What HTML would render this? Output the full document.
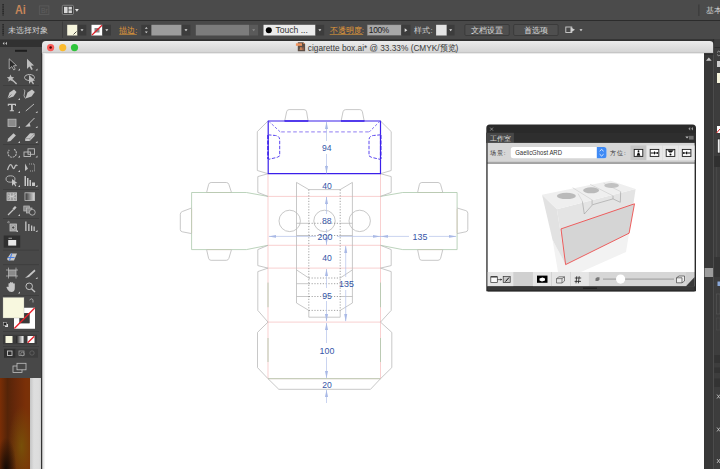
<!DOCTYPE html>
<html><head><meta charset="utf-8">
<style>
html,body{margin:0;padding:0;width:720px;height:469px;overflow:hidden;background:#3a3a3a;}
body{position:relative;font-family:"Liberation Sans",sans-serif;}
svg{position:absolute;left:0;top:0;display:block;}
</style></head>
<body>
<svg width="720" height="469" viewBox="0 0 720 469" font-family="Liberation Sans, sans-serif">
<defs>
  <linearGradient id="desk" x1="0" y1="0" x2="1" y2="0">
    <stop offset="0" stop-color="#7a2e06"/>
    <stop offset="0.25" stop-color="#552408"/>
    <stop offset="0.5" stop-color="#66280a"/>
    <stop offset="0.85" stop-color="#7a3008"/>
    <stop offset="1" stop-color="#7a3208"/>
  </linearGradient>
  <radialGradient id="deskglow" cx="0.72" cy="0.75" r="0.45">
    <stop offset="0" stop-color="#785608" stop-opacity="0.85"/>
    <stop offset="1" stop-color="#7a5008" stop-opacity="0"/>
  </radialGradient>
  <radialGradient id="deskdark" cx="0.2" cy="1" r="0.35">
    <stop offset="0" stop-color="#100804" stop-opacity="0.95"/>
    <stop offset="1" stop-color="#100804" stop-opacity="0"/>
  </radialGradient>
  <linearGradient id="title" x1="0" y1="0" x2="0" y2="1">
    <stop offset="0" stop-color="#ececec"/>
    <stop offset="1" stop-color="#d3d3d3"/>
  </linearGradient>
  <linearGradient id="strip" x1="0" y1="0" x2="1" y2="0">
    <stop offset="0" stop-color="#c4c4c4"/>
    <stop offset="0.3" stop-color="#dedede"/>
    <stop offset="0.7" stop-color="#dcdcdc"/>
    <stop offset="1" stop-color="#c0c0c0"/>
  </linearGradient>
</defs>

<!-- ===== top app bar ===== -->
<rect x="0" y="0" width="720" height="20" fill="#4b4b4b"/>
<rect x="0" y="20" width="720" height="1" fill="#2c2c2c"/>
<!-- bar 2 -->
<rect x="0" y="21" width="720" height="18" fill="#494949"/>
<rect x="0" y="39.5" width="720" height="1.5" fill="#303030"/>
<!-- bar1 content -->
<g>
  <path d="M3.1 4 V15.6" stroke="#1f1f1f" stroke-width="1.3" stroke-dasharray="1.6 0.6"/>
  <text x="15" y="14.2" font-size="12.4" font-weight="bold" fill="#c6865a" textLength="10.8" lengthAdjust="spacingAndGlyphs">Ai</text>
  <rect x="39.3" y="5.9" width="9.6" height="8.6" fill="none" stroke="#5e5e5e" stroke-width="0.7"/>
  <text x="41" y="12.8" font-size="6.8" fill="#5e5e5e">Br</text>
  <rect x="62.3" y="5.3" width="11.2" height="9.2" rx="1.2" fill="#3e3e3e" stroke="#9c9c9c" stroke-width="0.7"/>
  <rect x="64" y="6.8" width="3.6" height="6.3" fill="#d8d8d8"/>
  <rect x="68.5" y="6.8" width="3.4" height="2.8" fill="#d8d8d8"/>
  <rect x="68.5" y="10.3" width="3.4" height="2.8" fill="#d8d8d8"/>
  <path d="M75 9 H78.8 L76.9 11.8 Z" fill="#e8e8e8"/>
  <rect x="698.5" y="4.5" width="0.8" height="11.5" fill="#333"/>
  <text x="705.8" y="12.6" font-size="7.6" fill="#d0d0d0">基本</text>
</g>
<!-- bar2 content -->
<g>
  <path d="M3.1 24 V35.6" stroke="#1f1f1f" stroke-width="1.3" stroke-dasharray="1.6 0.6"/>
  <text x="8.3" y="33" font-size="7.8" fill="#d2d2d2">未选择对象</text>
  <rect x="62" y="21.5" width="0.8" height="16.5" fill="#3a3a3a"/>
  <!-- fill swatch -->
  <rect x="67.2" y="24.8" width="10.3" height="10.7" fill="#f7f6de"/>
  <path d="M73.5 34.5 L76.5 31.5" stroke="#222" stroke-width="0.8"/>
  <rect x="77.5" y="24.8" width="8.8" height="10.7" fill="#3b3b3b"/>
  <path d="M80.5 29.3 H83.5 L82 31.3 Z" fill="#dddddd"/>
  <!-- stroke swatch -->
  <rect x="91.5" y="24.8" width="10.9" height="10.7" fill="#ffffff"/>
  <rect x="94.5" y="28" width="5" height="4.5" fill="#888"/>
  <path d="M92 35 L102 25.3" stroke="#e01e28" stroke-width="1.2"/>
  <rect x="102.4" y="24.8" width="8.6" height="10.7" fill="#3b3b3b"/>
  <path d="M105.3 29.3 H108.3 L106.8 31.3 Z" fill="#dddddd"/>
  <!-- stroke label -->
  <text x="119.3" y="33" font-size="7.8" fill="#e39a3a">描边:</text>
  <rect x="119.3" y="34.3" width="17.5" height="0.6" fill="#e39a3a"/>
  <rect x="141.3" y="24.8" width="10.1" height="10.7" fill="#3c3c3c"/>
  <path d="M144.8 28.7 H147.8 L146.3 27 Z M144.8 31.6 H147.8 L146.3 33.3 Z" fill="#cfcfcf"/>
  <rect x="151.4" y="24.8" width="30.2" height="10.7" fill="#9c9c9c"/>
  <rect x="181.6" y="24.8" width="8.8" height="10.7" fill="#3c3c3c"/>
  <path d="M184.5 29.3 H187.5 L186 31.3 Z" fill="#dddddd"/>
  <rect x="195.8" y="24.8" width="53.5" height="10.7" fill="#7c7c7c"/>
  <rect x="249.3" y="24.8" width="8.8" height="10.7" fill="#5a5a5a"/>
  <path d="M252.2 29.3 H255.2 L253.7 31.3 Z" fill="#8c8c8c"/>
  <!-- brush -->
  <rect x="263.5" y="24.8" width="52" height="10.7" fill="#ebebeb"/>
  <circle cx="268.8" cy="30.2" r="3" fill="#000"/>
  <text x="275.4" y="33.3" font-size="8.6" fill="#333">Touch ...</text>
  <rect x="315.5" y="24.8" width="8.7" height="10.7" fill="#3c3c3c"/>
  <path d="M318.4 29.3 H321.4 L319.9 31.3 Z" fill="#dddddd"/>
  <!-- opacity -->
  <text x="329.7" y="33" font-size="7.8" fill="#e39a3a">不透明度:</text>
  <rect x="329.7" y="34.3" width="33.5" height="0.6" fill="#e39a3a"/>
  <rect x="367.1" y="24.8" width="34.2" height="10.7" fill="#a8a8a8" stroke="#5a5a5a" stroke-width="0.5"/>
  <text x="368.8" y="33.2" font-size="8.4" fill="#222" letter-spacing="-0.3">100%</text>
  <rect x="401.3" y="24.8" width="9.2" height="10.7" fill="#3c3c3c"/>
  <path d="M404.7 28.3 L407.3 30.2 L404.7 32.1 Z" fill="#dddddd"/>
  <text x="414.4" y="33" font-size="7.8" fill="#d0d0d0">样式:</text>
  <rect x="436.1" y="24.8" width="10.7" height="10.7" fill="#e4e4e4"/>
  <rect x="446.8" y="24.8" width="7.8" height="10.7" fill="#3c3c3c"/>
  <path d="M449.2 29.3 H452.2 L450.7 31.3 Z" fill="#dddddd"/>
  <!-- buttons -->
  <rect x="464.9" y="24.5" width="44.3" height="11" rx="1.2" fill="#4f4f4f" stroke="#303030" stroke-width="0.6"/>
  <text x="487" y="32.9" font-size="7.8" fill="#dcdcdc" text-anchor="middle">文档设置</text>
  <rect x="513.7" y="24.5" width="44.4" height="11" rx="1.2" fill="#4f4f4f" stroke="#303030" stroke-width="0.6"/>
  <text x="536" y="32.9" font-size="7.8" fill="#dcdcdc" text-anchor="middle">首选项</text>
  <!-- arrange icon -->
  <rect x="565.8" y="27" width="6" height="5.5" fill="none" stroke="#cfcfcf" stroke-width="0.9"/>
  <path d="M570.5 27.2 L575 29.8 L570.5 32.4 Z" fill="#cfcfcf"/>
  <path d="M579.5 29.3 H582.5 L581 31.3 Z" fill="#dddddd"/>
</g>

<!-- desktop bottom-left -->
<rect x="0" y="378" width="30" height="91" fill="url(#desk)"/>
<rect x="0" y="378" width="30" height="91" fill="url(#deskglow)"/>
<rect x="0" y="378" width="30" height="91" fill="url(#deskdark)"/>
<rect x="30" y="378" width="13" height="91" fill="url(#strip)"/>

<!-- ===== left toolbar ===== -->
<rect x="0" y="39" width="42" height="339" fill="#484848"/>
<rect x="0" y="39.5" width="42" height="7.5" fill="#313131"/>
<path d="M4.3 41.8 L2.7 43.4 L4.3 45 Z M6.9 41.8 L5.3 43.4 L6.9 45 Z" fill="#c8c8c8"/>
<rect x="15" y="49.8" width="12" height="2" fill="#1e1e1e"/>
<!-- separators -->
<g fill="#3b3b3b">
  <rect x="3" y="85.3" width="36" height="0.7"/>
  <rect x="3" y="144" width="36" height="0.7"/>
  <rect x="3" y="189" width="36" height="0.7"/>
  <rect x="3" y="218.2" width="36" height="0.7"/>
  <rect x="3" y="249.8" width="36" height="0.7"/>
  <rect x="3" y="264.4" width="36" height="0.7"/>
  <rect x="3" y="295" width="36" height="0.7"/>
  <rect x="3" y="331" width="36" height="0.7"/>
  <rect x="3" y="346" width="36" height="0.7"/>
</g>
<!-- tool icons -->
<g fill="#c6c6c6" stroke="none">
  <!-- corner triangles -->
  <path d="M18 70.5 H20 V68.5 Z M35.5 70.5 H37.5 V68.5 Z M18 100 H20 V98 Z M18 113 H20 V111 Z M35.5 113 H37.5 V111 Z M18 128 H20 V126 Z M35.5 128 H37.5 V126 Z M18 143 H20 V141 Z M35.5 143 H37.5 V141 Z M18 157.5 H20 V155.5 Z M35.5 157.5 H37.5 V155.5 Z M18 172 H20 V170 Z M18 187 H20 V185 Z M35.5 187 H37.5 V185 Z M18 216 H20 V214 Z M16 232 H18 V230 Z M35.5 232 H37.5 V230 Z M35.5 279 H37.5 V277 Z M18 293.5 H20 V291.5 Z"/>
  <!-- selection -->
  <path d="M9.2 58.8 V69 L11.8 66.5 L13.8 70 L15.2 69.2 L13.4 65.8 L16.5 65.6 Z" fill="#2a2a2a" stroke="#c0c0c0" stroke-width="0.8"/>
  <path d="M27 58.8 V69 L29.4 66.5 L31.4 70 L32.8 69.2 L31 65.8 L34 65.6 Z" fill="#bdbdbd"/>
  <!-- magic wand -->
  <path d="M10.5 74.5 L11.6 77 L14.2 77.2 L12.2 79 L12.8 81.6 L10.5 80.2 L8.2 81.6 L8.8 79 L6.8 77.2 L9.4 77 Z" fill="#bdbdbd"/>
  <path d="M12 79.5 L16.6 84" stroke="#bdbdbd" stroke-width="1.3"/>
  <!-- lasso -->
  <ellipse cx="29.5" cy="77.5" rx="5" ry="3" fill="none" stroke="#bdbdbd" stroke-width="1"/>
  <path d="M29 75 V84 L31 81.5 L33 84.5 L34 83.8 L32.5 81 L35 80.5 Z" fill="#bdbdbd"/>
  <!-- pen -->
  <path d="M7.5 98.5 L9.5 92.5 L14 89.5 L16.5 92 L13.5 96.5 Z" fill="#c4c4c4"/>
  <path d="M7.5 98.5 L11.5 94.5" stroke="#555" stroke-width="0.6"/>
  <path d="M25.5 98.5 L27.5 92.5 L32 89.5 L34.8 92 L31.5 96.5 Z" fill="#c4c4c4"/>
  <path d="M25.5 98.5 Q23 96 24.5 93 Q25.5 90.5 24 89.5" stroke="#c4c4c4" stroke-width="0.8" fill="none"/>
  <!-- type -->
  <path d="M7.8 103.8 H16 V106 H15.2 L15 105 H12.8 V110.2 H14 V111.2 H9.8 V110.2 H11 V105 H8.8 L8.6 106 H7.8 Z"/>
  <!-- line -->
  <path d="M25.8 111 L34 104" stroke="#c4c4c4" stroke-width="0.9"/>
  <!-- rect -->
  <rect x="8" y="119.2" width="8" height="7.3" fill="#8a8a8a" stroke="#b8b8b8" stroke-width="0.8"/>
  <!-- paintbrush -->
  <path d="M34.5 118 L29 123.5" stroke="#c4c4c4" stroke-width="1"/>
  <path d="M29.5 122.5 L25.2 126.8 L30.5 126.5 Z" fill="#c4c4c4"/>
  <!-- pencil -->
  <path d="M7.3 141.8 L8.2 138.5 L13.5 133.2 L15.9 135.6 L10.6 140.9 Z" fill="#c4c4c4"/>
  <!-- eraser -->
  <path d="M25.2 138.5 L30 133.3 H34.6 V136 L29.8 141 H25.2 Z" fill="#c4c4c4"/>
  <path d="M25.2 138.5 H30 L34.6 133.3 M30 138.5 V141" stroke="#777" stroke-width="0.5" fill="none"/>
  <!-- rotate -->
  <path d="M14 149.3 A4.2 4.2 0 1 1 9.3 150" stroke="#bdbdbd" stroke-width="1.1" fill="none" stroke-dasharray="2 0.8"/>
  <!-- scale -->
  <rect x="24" y="152" width="6.5" height="4.5" fill="none" stroke="#bdbdbd" stroke-width="0.9"/>
  <rect x="28" y="148.8" width="6.5" height="5.5" fill="none" stroke="#bdbdbd" stroke-width="0.9"/>
  <!-- warp -->
  <path d="M7.5 170 Q10 162 12 166 Q13.5 171 15 166.5 Q16 164 17.3 166" stroke="#bdbdbd" stroke-width="1.3" fill="none"/>
  <!-- free transform -->
  <path d="M25 163.5 V171 L28 168.8 Z" fill="#bdbdbd"/>
  <path d="M29 164 H34.5 V171 H29" stroke="#bdbdbd" stroke-width="0.8" stroke-dasharray="1 1" fill="none"/>
  <!-- shape builder -->
  <ellipse cx="10.5" cy="179" rx="4.5" ry="3.2" fill="none" stroke="#bdbdbd" stroke-width="0.9"/>
  <path d="M12 179 V186 L13.8 184 L15.5 186.5 L16.3 185.8 L15 183.5 L17.3 183 Z" fill="#c4c4c4"/>
  <!-- perspective -->
  <path d="M24.5 176 H26 V186 H24.5 Z M27 178 H28.5 V186 H27 Z M29.5 180 H31 V186 H29.5 Z M32 182.5 H35 V186 H32 Z"/>
  <!-- mesh -->
  <rect x="7" y="192.8" width="9.6" height="7.7" fill="#9a9a9a" stroke="#c4c4c4" stroke-width="0.8"/>
  <path d="M8 195 Q12 198 16 194 M8 198.5 Q11 195 16 198 M10 193 Q12 197 10 200.5 M13.5 193 Q12 197 14 200.5" stroke="#dddddd" stroke-width="0.6" fill="none"/>
</g>
<defs>
  <linearGradient id="gradtool" x1="0" y1="0" x2="1" y2="0">
    <stop offset="0" stop-color="#333"/><stop offset="1" stop-color="#ddd"/>
  </linearGradient>
  <linearGradient id="gradmode" x1="0" y1="0" x2="1" y2="0">
    <stop offset="0" stop-color="#222"/><stop offset="1" stop-color="#fff"/>
  </linearGradient>
</defs>
<g fill="#c6c6c6">
  <!-- gradient tool -->
  <rect x="25" y="192.8" width="9.6" height="7.7" fill="url(#gradtool)" stroke="#c0c0c0" stroke-width="0.8"/>
  <!-- eyedropper -->
  <path d="M8 215 L13.5 209.5" stroke="#c4c4c4" stroke-width="1.3"/>
  <path d="M12.5 208.5 L15 206 L16.6 207.6 L14 210.2 Z"/>
  <!-- blend -->
  <rect x="23.8" y="206" width="5.5" height="5" fill="#8a8a8a" stroke="#c0c0c0" stroke-width="0.7"/>
  <rect x="26.5" y="208" width="5.5" height="5" fill="#8a8a8a" stroke="#c0c0c0" stroke-width="0.7"/>
  <circle cx="32.3" cy="212.3" r="2.9" fill="#474747" stroke="#c0c0c0" stroke-width="0.8"/>
  <!-- symbol sprayer -->
  <rect x="10" y="224" width="6.5" height="7" fill="#9a9a9a" stroke="#c4c4c4" stroke-width="0.8"/>
  <circle cx="13.2" cy="227.5" r="1.6" fill="#474747" stroke="#ddd" stroke-width="0.6"/>
  <path d="M7 222 L9 223 M8 221 L10 222.5" stroke="#bbb" stroke-width="0.6"/>
  <!-- graph -->
  <path d="M25.2 221.5 H26.5 V231 H25.2 Z M28.2 224 H29.5 V231 H28.2 Z M31 225.5 H32.3 V231 H31 Z M33.5 226.5 H34.8 V231 H33.5 Z"/>
  <!-- artboard selected -->
  <rect x="3.7" y="235.5" width="16.5" height="12.2" fill="#2f2f2f"/>
  <rect x="8.2" y="240" width="8" height="5.6" fill="#e8e8e8"/>
  <rect x="8.5" y="237.8" width="3.5" height="0.8" fill="#bbb"/>
  <!-- slice eraser blue -->
  <path d="M7 259 L10.5 253.5 H17 L14 260.5 H8 Z" fill="#c8c8c8"/>
  <path d="M7.8 257.5 H14.5 M11.8 253.5 L9.5 260.5" stroke="#4a7fe0" stroke-width="1.1"/>
  <!-- artboard tool -->
  <rect x="8.5" y="270" width="7.5" height="6" fill="#8a8a8a"/>
  <path d="M6 270 H18 M6 276 H18 M8.5 267.6 V278.5 M16 267.6 V278.5" stroke="#c0c0c0" stroke-width="0.7"/>
  <!-- slice -->
  <path d="M25 278 L34.5 269.5 L35.5 271 L29 277 Z"/>
  <!-- hand -->
  <path d="M8.5 287 V284 Q8.5 283 9.3 283 Q10 283 10 284 V283 Q10 282 10.8 282 Q11.6 282 11.6 283 V283 Q11.6 282.2 12.4 282.2 Q13.2 282.2 13.2 283 V284 Q13.2 283.3 14 283.3 Q14.8 283.3 14.8 284 V288 Q14.8 292 11.5 292 Q9 292 7.5 289.5 L6.5 287.5 Q6.3 286.5 7.3 286.7 Z"/>
  <!-- zoom -->
  <circle cx="29.2" cy="286.3" r="3.3" fill="none" stroke="#c0c0c0" stroke-width="1"/>
  <path d="M31.5 288.8 L35 292" stroke="#c0c0c0" stroke-width="1.5"/>
  <!-- fill / stroke -->
  <path d="M14 307.7 H35 V328.7 H14 Z M19.5 313.2 V323.2 H29.5 V313.2 Z" fill="#ffffff" fill-rule="evenodd"/>
  <rect x="19.5" y="313.2" width="10" height="10" fill="#3a3a3a"/>
  <path d="M14.3 328.4 L34.7 308" stroke="#e8202a" stroke-width="1.4"/>
  <rect x="3" y="297.4" width="21" height="20.6" fill="#f8f8df" stroke="#999" stroke-width="0.3"/>
  <path d="M29.5 300 L31.6 298.6 M33 302.5 L33 300.5 Q33 299 31.5 299" stroke="#c8c8c8" stroke-width="0.7" fill="none"/>
  <rect x="5" y="324" width="3" height="3" fill="#ddd"/>
  <rect x="3.6" y="322.6" width="3" height="3" fill="#222" stroke="#ccc" stroke-width="0.5"/>
  <!-- color mode row -->
  <rect x="3" y="334.8" width="34" height="9.4" fill="#3a3a3a"/>
  <rect x="5.5" y="336" width="7" height="7" fill="#f8f8df"/>
  <rect x="16.5" y="336" width="7" height="7" fill="url(#gradmode)"/>
  <rect x="27.5" y="336" width="7" height="7" fill="#ffffff"/>
  <path d="M27.7 342.8 L34.3 336.2" stroke="#e8202a" stroke-width="1.3"/>
  <!-- draw mode row -->
  <rect x="4" y="348.8" width="34" height="8.8" fill="#3d3d3d"/>
  <rect x="4" y="348.8" width="11.3" height="8.8" fill="#2f2f2f"/>
  <rect x="7.5" y="351" width="4.5" height="4.5" fill="none" stroke="#c4c4c4" stroke-width="0.9"/>
  <rect x="19" y="351" width="5" height="4.5" fill="none" stroke="#999" stroke-width="0.8"/>
  <circle cx="22.5" cy="354" r="1.8" fill="none" stroke="#999" stroke-width="0.7"/>
  <circle cx="32" cy="353" r="2.2" fill="none" stroke="#6a6a6a" stroke-width="0.7"/>
  <!-- screen mode -->
  <rect x="13" y="366" width="9" height="6.5" fill="none" stroke="#c0c0c0" stroke-width="0.8"/>
  <rect x="17" y="363.3" width="9" height="6.5" fill="#474747" stroke="#c0c0c0" stroke-width="0.8"/>
</g>

<!-- ===== document window ===== -->
<path d="M42 53 V45 Q42 41 46 41 H709.5 Q713.5 41 713.5 45 V53 Z" fill="url(#title)"/>
<rect x="42" y="53" width="672" height="416" fill="#ffffff"/>
<rect x="42" y="52.5" width="671.5" height="0.8" fill="#b8b8b8"/>
<circle cx="50.6" cy="47.6" r="3.6" fill="#f95b57"/>
<circle cx="50.6" cy="47.6" r="1.25" fill="#4a0606"/>
<circle cx="62.7" cy="47.6" r="3.6" fill="#fbbb2e"/>
<circle cx="74.5" cy="47.6" r="3.6" fill="#2fc53c"/>
<!-- doc icon -->
<path d="M297.8 42.3 H303.3 L305.1 44.1 V51.2 H297.8 Z" fill="#5e4e44"/>
<path d="M303.3 42.3 L305.1 44.1 H303.3 Z" fill="#e8925a"/>
<rect x="295.9" y="43.3" width="6.1" height="2.5" fill="#ee9460"/>
<text x="299.2" y="50.2" font-size="4.2" font-weight="bold" fill="#e09060">Ai</text>
<text x="307.8" y="51" font-size="9.4" fill="#3a3a3a" textLength="150.5" lengthAdjust="spacingAndGlyphs">cigarette box.ai* @ 33.33% (CMYK/预览)</text>
<defs>
  <linearGradient id="lshadow" x1="0" y1="0" x2="1" y2="0">
    <stop offset="0" stop-color="#9a9a9a"/>
    <stop offset="0.35" stop-color="#e4e4e4"/>
    <stop offset="1" stop-color="#ffffff"/>
  </linearGradient>
</defs>
<rect x="41" y="53" width="1" height="416" fill="#333"/>
<rect x="42" y="53.3" width="3.5" height="416" fill="url(#lshadow)"/>
<!-- scrollbar -->
<rect x="704.2" y="53.3" width="9.4" height="416" fill="#383838"/>
<rect x="704.2" y="53.3" width="9.4" height="1.2" fill="#252525"/>
<rect x="704.2" y="53.3" width="0.8" height="416" fill="#2c2c2c"/>
<path d="M708.8 57.4 L711.7 60.7 H706 Z" fill="#c8c8c8"/>
<rect x="704.6" y="268" width="8.8" height="9" fill="#9c9c9c"/>
<rect x="713.4" y="39" width="0.8" height="430" fill="#262626"/>
<!-- right dock -->
<rect x="714.2" y="39" width="5.8" height="430" fill="#3d3d3d"/>
<g fill="none" stroke="#bbb" stroke-width="0.7">
  <path d="M717 52.5 L718.8 51 L720 52.2 M717 54.5 L718.8 56 L720 54.8"/>
</g>
<rect x="717" y="61" width="3" height="6" fill="#cfcfcf"/>
<rect x="714.5" y="47" width="5.5" height="0.8" fill="#2a2a2a"/>
<rect x="717" y="73" width="3" height="10" fill="#f6f4dc"/>
<rect x="717" y="126" width="3" height="7" fill="#ffffff"/>
<path d="M716.5 133 L720 129" stroke="#e02020" stroke-width="1"/>
<rect x="717.5" y="139" width="2.5" height="14" fill="#f0f0f0" stroke="#222" stroke-width="0.6"/>
<rect x="714.2" y="156" width="5.8" height="11" fill="#303030"/>
<rect x="716.3" y="167" width="0.8" height="90" fill="#4c4c4c"/>
<rect x="714.2" y="257" width="5.8" height="20" fill="#353535"/>
<rect x="717.5" y="281.5" width="2.5" height="4.5" fill="#8aa8d8"/>
<rect x="716.3" y="294" width="3.7" height="20" fill="none" stroke="#555" stroke-width="0.7"/>
<rect x="716.3" y="318" width="3.7" height="12" fill="none" stroke="#4a4a4a" stroke-width="0.7"/>
<rect x="714.2" y="355" width="5.8" height="8" fill="#333"/>
<rect x="714.2" y="367.5" width="5.8" height="5.5" fill="#333"/>
<rect x="714.2" y="378.5" width="5.8" height="8.5" fill="#333"/>
<path d="M717 394.5 L720 398.5 M717 398.5 L720 394.5 M717 427.5 L720 431.5 M717 431.5 L720 427.5 M717 459 L720 463 M717 463 L720 459" stroke="#c8c8c8" stroke-width="0.8"/>

<!-- ===== die line ===== -->
<g fill="none" stroke-linejoin="round">
  <!-- pink fold lines -->
  <g stroke="#f6bcbc" stroke-width="0.7">
    <path d="M268 173.7 V378.7 M380.5 173.7 V378.7"/>
    <path d="M268 196.4 H380.5 M268 245.3 H380.5 M268 268.1 H380.5 M268 322.1 H380.5 M268 378.7 H380.5"/>
    <path d="M191.6 209 V233 M457.1 209 V233 M207 192.5 H231 M207 249.6 H231 M418 192.5 H442.5 M418 249.6 H442.5"/>
  </g>
  <!-- green -->
  <g stroke="#abc8ab" stroke-width="0.8">
    <path d="M268 196.4 L246.4 192.5 H191.6 V249.6 H246.4 L268 245.3"/>
    <path d="M380.5 196.4 L402.7 192.5 H457.1 V249.6 H402.7 L380.5 245.3"/>
    <path d="M268 282.6 V307.2 M380.5 282.6 V307.2 M268 338 V362 M380.5 338 V362"/>
    <path d="M268 378.7 H380.5"/>
  </g>
  <!-- gray cut lines -->
  <g stroke="#bababa" stroke-width="0.8">
    <path d="M284.7 121 L286.6 111.8 Q287 109.6 289.2 109.6 H304 Q306.2 109.6 306.6 111.8 L308.1 121 M341.1 121 L343 111.8 Q343.5 109.6 345.7 109.6 H359.8 Q362 109.6 362.4 111.8 L364.2 121"/>
    <path d="M268 121 L257.3 131.6 V170.5 L268 173.7 M380.5 121 L391.2 131.6 V170.5 L380.5 173.7"/>
    <path d="M268 173.7 L257.8 176.6 V192.4 L268 196.4 M380.5 173.7 L391.2 176.6 V192.4 L380.5 196.4"/>
    <path d="M206.6 192.5 L208.6 184.5 Q209.1 182.5 211.1 182.5 H226.3 Q228.3 182.5 228.9 184.5 L231.5 192.5 M206.6 249.6 L208.6 258.3 Q209.1 260.3 211.1 260.3 H226.3 Q228.3 260.3 228.9 258.3 L231.5 249.6 M191.6 208 L182.3 211.5 Q180.3 212.3 180.3 214.3 V229.5 Q180.3 231.5 182.3 231.8 L191.6 233.6"/>
    <path d="M417.6 192.5 L419.4 184.5 Q419.8 182.5 421.8 182.5 H438 Q440 182.5 440.6 184.5 L442.8 192.5 M417.6 249.6 L419.4 258.3 Q419.8 260.3 421.8 260.3 H438 Q440 260.3 440.6 258.3 L442.8 249.6 M457.1 208 L465.8 210.6 Q467.8 211.2 467.8 213.2 V229.5 Q467.8 231.5 465.8 231.8 L457.1 233.6"/>
    <path d="M268 245.3 L257.8 249.6 V265.6 L268 268.1 M380.5 245.3 L391.2 249.6 V265.6 L380.5 268.1"/>
    <path d="M268 268.1 L257.8 271.6 V310.4 L268 322.1 M380.5 268.1 L391.2 271.6 V310.4 L380.5 322.1"/>
    <path d="M268 322.1 L257.5 332.4 V367.6 L268 378.7 M380.5 322.1 L391.8 332.4 V367.6 L380.5 378.7"/>
    <path d="M268 378.7 L278.8 389.3 H370.5 L380.5 378.7"/>
    <!-- insert -->
    <path d="M296.5 303 V182.4 L308.8 189.6 H340.2 L352.4 182.4 V303"/>
    <path d="M296.5 269.9 L308.8 278 M352.4 269.9 L340.2 278"/>
    <path d="M296.5 303 L308.8 310.4 V317.2 H340.2 V310.4 L352.4 303"/>
    <path d="M296.5 223.3 H308.8 M340.2 223.3 H352.4 M296.5 235.5 H308.8 M340.2 235.5 H352.4 M296.5 283.7 H308.8 M340.2 283.7 H352.4 M296.5 296.5 H308.8 M340.2 296.5 H352.4"/>
    <circle cx="289.7" cy="220.9" r="10.7"/>
    <circle cx="324.5" cy="220.9" r="10.7"/>
    <circle cx="359.7" cy="220.9" r="10.7"/>
  </g>
  <!-- dotted -->
  <g stroke="#8c8c8c" stroke-width="0.8" stroke-dasharray="1.2 1.6">
    <path d="M308.8 189.6 V310.4 M340.2 189.6 V310.4"/>
    <path d="M308.8 223.3 H340.2 M308.8 235.5 H340.2 M308.8 278 H340.2 M308.8 283.7 H340.2 M308.8 296.5 H340.2 M308.8 310.4 H340.2"/>
  </g>
  <!-- blue top panel -->
  <path d="M284.5 121 H308.3 M341 121 H364.5" stroke="#3b20ea" stroke-width="1.5"/>
  <rect x="268.2" y="121" width="112.3" height="52.7" stroke="#3b20ea" stroke-width="1.2"/>
  <path d="M268 135 V159 M380.7 135 V159" stroke="#3b20ea" stroke-width="1.5" stroke-dasharray="4 1.5"/>
  <g stroke="#a697f5" stroke-width="1.2" stroke-dasharray="3.6 2.4">
    <path d="M281.2 131.9 H369.3"/>
  </g>
  <g stroke="#7564f2" stroke-width="0.9" stroke-dasharray="2.8 1.6">
    <path d="M268.5 121 L280.2 131.9 M380.2 121 L369.3 131.9"/>
  </g>
  <g stroke="#5a46f0" stroke-width="1" stroke-dasharray="3.5 1.5">
    <path d="M268 134.8 L275.4 135.5 Q279.7 136 279.7 140 V155.9 L277.3 157.3 L268 159.5"/>
    <path d="M380.7 134.8 L373.3 135.5 Q369 136 369 140 V155.9 L371.4 157.3 L380.7 159.5"/>
  </g>
  <!-- dimension lines -->
  <g stroke="#b3c1ea" stroke-width="0.7">
    <path d="M326.5 122 V141 M326.5 154 V173"/>
    <path d="M326.5 197 V214 M326.5 229 V233 M326.5 240 V245"/>
    <path d="M326.5 269 V288 M326.5 301 V321"/>
    <path d="M326.5 323 V343 M326.5 357 V378"/>
    <path d="M326.5 390 V403"/>
    <path d="M345.7 246 V277 M345.7 290 V321"/>
    <path d="M269 236.4 H316 M337 236.4 H409 M429 236.4 H456"/>
    <path d="M326.5 165 V173.5 M326.5 197 V205"/>
  </g>
  <g fill="#a9b9e6" stroke="none">
    <path d="M326.5 121.5 L325 129 L328 129 Z M326.5 173.5 L325 166 L328 166 Z"/>
    <path d="M326.5 196.6 L325 204 L328 204 Z M326.5 245 L325 237.5 L328 237.5 Z"/>
    <path d="M326.5 268.4 L325 276 L328 276 Z M326.5 321.8 L325 314 L328 314 Z"/>
    <path d="M326.5 322.4 L325 330 L328 330 Z M326.5 378.4 L325 371 L328 371 Z"/>
    <path d="M326.5 389.5 L325 397 L328 397 Z"/>
    <path d="M345.7 245.6 L344.2 253 L347.2 253 Z M345.7 321.8 L344.2 314 L347.2 314 Z"/>
    <path d="M268.3 236.4 L276 235 L276 237.8 Z M380.7 236.4 L373 235 L373 237.8 Z M380.3 236.4 L388 235 L388 237.8 Z M456.8 236.4 L449 235 L449 237.8 Z"/>
  </g>
</g>
<!-- ===== 3D panel ===== -->
<g>
  <path d="M486.3 128 Q486.3 124.5 489.8 124.5 H692.5 Q696 124.5 696 128 V291.3 H486.3 Z" fill="#2a2a2a"/>
  <rect x="486.3" y="132.8" width="209.7" height="10.1" fill="#2e2e2e"/>
  <rect x="486.3" y="132.8" width="27.6" height="10.1" fill="#474747"/>
  <text x="500.8" y="140.6" font-size="7" fill="#d8d8d8" text-anchor="middle">工作室</text>
  <path d="M490.2 127.6 L493 130.6 M493 127.6 L490.2 130.6" stroke="#9a9a9a" stroke-width="0.8"/>
  <path d="M690.2 127 L688.4 128.8 L690.2 130.6 Z M693 127 L691.2 128.8 L693 130.6 Z" fill="#9a9a9a"/>
  <path d="M685.3 136.6 H688.8 L687.05 138.6 Z" fill="#bdbdbd"/>
  <rect x="689" y="135.8" width="4.6" height="3.8" fill="#6c6c6c"/>
  <!-- controls row -->
  <rect x="487.6" y="142.9" width="207" height="19.2" fill="#d6d6d6"/>
  <rect x="487.6" y="161.8" width="207" height="2" fill="#a6a6a6"/>
  <text x="489.6" y="155.4" font-size="6.2" fill="#333" letter-spacing="1.1">场景:</text>
  <rect x="510.8" y="147" width="95.7" height="11.3" rx="2.5" fill="#ffffff"/>
  <path d="M596.8 147 H604 Q606.5 147 606.5 149.5 V155.8 Q606.5 158.3 604 158.3 H596.8 Z" fill="#3f8af5"/>
  <path d="M599.6 151.2 L601.6 149.4 L603.6 151.2 M599.6 154.2 L601.6 156 L603.6 154.2" stroke="#ffffff" stroke-width="0.8" fill="none"/>
  <text x="515.2" y="154.7" font-size="7.2" fill="#303030" textLength="46.8" lengthAdjust="spacingAndGlyphs">GaelicGhost ARD</text>
  <text x="610" y="155.4" font-size="6.2" fill="#333" letter-spacing="1">方位:</text>
  <rect x="630.5" y="145.5" width="15.8" height="14.6" fill="#c6c6c6"/>
  <rect x="646.6" y="145.5" width="15.6" height="14.6" fill="#e8e8e8"/>
  <rect x="662.6" y="145.5" width="15.6" height="14.6" fill="#e8e8e8"/>
  <rect x="678.6" y="145.5" width="16" height="14.6" fill="#e8e8e8"/>
  <g fill="#ffffff" stroke="#1a1a1a" stroke-width="0.9">
    <rect x="634.2" y="149.4" width="8.6" height="7"/>
    <rect x="650.2" y="149.4" width="8.6" height="7"/>
    <rect x="666.2" y="149.4" width="8.6" height="7"/>
    <rect x="682.3" y="149.4" width="8.6" height="7"/>
  </g>
  <g fill="#111">
    <circle cx="638.5" cy="151.2" r="0.9"/><path d="M636.6 155.8 L637.8 152.4 H639.2 L640.4 155.8 Z"/>
    <path d="M650.6 152.4 H654 V151 L656 152.9 L654 154.8 V153.4 H650.6 Z"/><circle cx="657.2" cy="152.9" r="1"/>
    <path d="M667.2 150.3 H673.8 L671.6 152.6 H669.4 Z"/><circle cx="670.5" cy="154.4" r="1"/>
    <path d="M690.5 152.4 H687.1 V151 L685.1 152.9 L687.1 154.8 V153.4 H690.5 Z"/><circle cx="683.9" cy="152.9" r="1"/>
  </g>
  <!-- preview -->
  <rect x="487.6" y="163.8" width="207" height="108.2" fill="#ffffff"/>
  <!-- 3D box -->
  <path d="M552.5 239.8 L565.6 264.6 L629.1 233.2 L626 252 L572 276 L558 272 Z" fill="#f2f2f2"/>
  <path d="M542 194.7 L556.9 209.3 L565.6 264.6 L552.5 239.8 Z" fill="#e2e2e2"/>
  <path d="M556.9 209.3 L635.6 188.9 L629.1 233.2 L565.6 264.6 Z" fill="#e4e4e4"/>
  <path d="M542 194.7 L610.8 180.8 L635.6 188.9 L556.9 209.3 Z" fill="#efefef"/>
  <path d="M561 228.9 L634.5 203.8 L629.1 233.2 L565.6 264.6 Z" fill="#d5d5d5" stroke="#f03c3c" stroke-width="0.8"/>
  <g fill="none" stroke="#8e8e8e" stroke-width="0.5">
    <path d="M582.4 201.3 L584.3 214 L592.6 204.7 L613 198.9 L620.3 202.3 L620.7 191.6"/>
    <path d="M592.1 199.9 V204.7 M613 196 V198.9"/>
  </g>
  <g fill="none" stroke="#c4c4c4" stroke-width="0.5">
    <path d="M572.6 187.7 L592.1 199.9 M590.1 184.3 L613.4 196 M603.7 183.3 L620.7 191.6 M582.4 201.3 L578 193.5"/>
  </g>
  <ellipse cx="566.4" cy="195.9" rx="9.5" ry="3.2" fill="#bababa"/>
  <ellipse cx="591.1" cy="190.3" rx="8" ry="3" fill="#bababa"/>
  <ellipse cx="611.6" cy="185.6" rx="7.3" ry="2.5" fill="#c2c2c2"/>
  <!-- bottom bar -->
  <rect x="487.6" y="272" width="207" height="14.3" fill="#d0d0d0"/>
  <rect x="487.6" y="272" width="25.7" height="14.3" fill="#e6e6e6"/>
  <rect x="532.9" y="272" width="56" height="14.3" fill="#e6e6e6"/>
  <rect x="551.2" y="272" width="0.6" height="14.3" fill="#c8c8c8"/>
  <rect x="570.2" y="272" width="0.6" height="14.3" fill="#c8c8c8"/>
  <rect x="589" y="272" width="97" height="14.3" fill="#d6d6d6"/>
  <g fill="none" stroke="#333" stroke-width="0.7">
    <rect x="490.8" y="276.8" width="6.5" height="5.6" fill="#fafafa"/>
    <path d="M490.8 276.8 H497.3" stroke-width="1.2"/>
    <path d="M497.3 279.6 H501"/>
    <rect x="503.2" y="276.6" width="7" height="6" fill="#c8c8c8"/>
    <path d="M505.5 281.5 L509 277.5" stroke="#111" stroke-width="1"/>
  </g>
  <path d="M500.5 278.4 L502.2 279.6 L500.5 280.8 Z" fill="#222"/>
  <rect x="537" y="275.6" width="10.5" height="7.2" fill="#000"/>
  <path d="M539.5 278.5 L542.5 277.5 L545 278.5 L545 280.5 L542 281.5 L539.5 280.5 Z" fill="#fff"/>
  <path d="M556.5 278.6 L559 276.8 H564.5 V281 L562 283 H556.5 Z M556.5 278.6 H562 V283 M562 278.6 L564.5 276.8" fill="none" stroke="#555" stroke-width="0.7"/>
  <path d="M576.8 276.2 L576 283.3 M579.2 276.2 L578.4 283.3 M574.8 278 H581.2 M574.6 281.4 H581" stroke="#222" stroke-width="0.8"/>
  <rect x="603" y="278.6" width="71" height="1" fill="#9a9a9a"/>
  <circle cx="620.6" cy="279.1" r="4.6" fill="#ffffff"/>
  <path d="M595.5 278.4 L597 277.2 H599.5 V279.8 L598 281 H595.5 Z" fill="#777"/>
  <path d="M676.5 277.8 L679 276 H684.5 V281 L682 282.8 H676.5 Z M676.5 277.8 H682 V282.8" fill="#f0f0f0" stroke="#444" stroke-width="0.7"/>
  <path d="M686 286.3 L694.6 277 V286.3 Z" fill="#3a3a3a"/>
  <rect x="487.6" y="286.3" width="207" height="5" fill="#383838"/><rect x="487.6" y="290" width="207" height="1.3" fill="#2a2a2a"/><rect x="583" y="287.6" width="14" height="1.2" fill="#1e1e1e"/>
</g>

<g fill="#3656a8" font-size="9.2" text-anchor="middle">
  <text x="326.8" y="151" textLength="9.6" lengthAdjust="spacingAndGlyphs">94</text>
  <text x="327" y="188.8" textLength="9.6" lengthAdjust="spacingAndGlyphs">40</text>
  <text x="326.8" y="223.8" textLength="9.6" lengthAdjust="spacingAndGlyphs">88</text>
  <text x="325" y="239.8" textLength="14.8" lengthAdjust="spacingAndGlyphs">200</text>
  <text x="327" y="261" textLength="9.6" lengthAdjust="spacingAndGlyphs">40</text>
  <text x="327" y="299" textLength="9.6" lengthAdjust="spacingAndGlyphs">95</text>
  <text x="346.5" y="287.2" textLength="14.8" lengthAdjust="spacingAndGlyphs">135</text>
  <text x="420" y="240" textLength="14.8" lengthAdjust="spacingAndGlyphs">135</text>
  <text x="327" y="354" textLength="14.8" lengthAdjust="spacingAndGlyphs">100</text>
  <text x="327" y="388" textLength="9.6" lengthAdjust="spacingAndGlyphs">20</text>
</g>

</svg>
</body></html>
